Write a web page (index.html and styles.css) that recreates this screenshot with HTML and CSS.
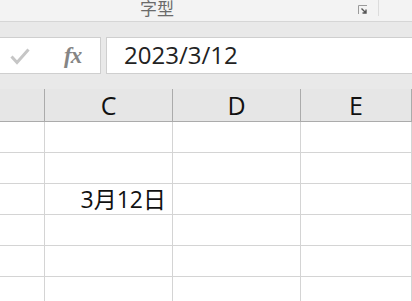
FILE: index.html
```html
<!DOCTYPE html>
<html lang="zh-Hant">
<head>
  <meta charset="UTF-8" />
  <title>字型</title>
  <link rel="stylesheet" href="styles.css">
</head>
<body>
  <div class="ribbon">
    <div class="ribbonGroup">
      <span class="groupLabel">字型</span>
      <span class="launcher">
        <svg width="10" height="10" viewBox="0 0 10 10">
          <path d="M0.5 9V0.5H9" fill="none" stroke="#9a9a9a" stroke-width="1"/>
          <path d="M3.5 3.5L8 8M8 4.5V8H4.5" fill="none" stroke="#555" stroke-width="1.4"/>
        </svg>
      </span>
    </div>
  </div>

  <div class="band"></div>

  <div class="formulaBar">
    <div class="nameArea">
      <span class="check">
        <svg width="20" height="18" viewBox="0 0 20 18">
          <path d="M1.5 9.5L7 15.5L18.5 2.5" fill="none" stroke="#c6c6c6" stroke-width="3"/>
        </svg>
      </span>
      <span class="fx">fx</span>
    </div>
    <div class="splitter"></div>
    <div class="formulaInput">2023/3/12</div>
  </div>

  <div class="band"></div>

  <div class="sheet">
    <div class="cell head"></div>
    <div class="cell head">C</div>
    <div class="cell head">D</div>
    <div class="cell head">E</div>

    <div class="cell"></div><div class="cell"></div><div class="cell"></div><div class="cell"></div>
    <div class="cell"></div><div class="cell"></div><div class="cell"></div><div class="cell"></div>
    <div class="cell"></div><div class="cell date">3月12日</div><div class="cell"></div><div class="cell"></div>
    <div class="cell"></div><div class="cell"></div><div class="cell"></div><div class="cell"></div>
    <div class="cell"></div><div class="cell"></div><div class="cell"></div><div class="cell"></div>
    <div class="cell"></div><div class="cell"></div><div class="cell"></div><div class="cell"></div>
  </div>
</body>
</html>
```

FILE: styles.css
```css
* {
  box-sizing: border-box;
}

body {
  margin: 0;
  width: 412px;
  height: 301px;
  overflow: hidden;
  background-color: #fff;
  font-family: 'Open Sans', 'Noto Sans CJK TC', sans-serif;
}

.ribbon {
  height: 22px;
  background-color: #f3f3f3;
  border-bottom: 1px solid #d6d6d6;
  overflow: hidden;
}

.ribbonGroup {
  width: 379px;
  height: 16px;
  display: flex;
  border-right: 1px solid #dcdcdc;
}

.groupLabel {
  margin-left: 140px;
  font-family: 'Noto Sans CJK TC', sans-serif;
  font-size: 17px;
  line-height: 16px;
  color: #6a6a6a;
}

.launcher {
  margin-left: auto;
  margin-right: 10px;
  margin-top: 5px;
  width: 10px;
  height: 10px;
  display: flex;
}

.band {
  height: 15px;
  background-color: #e9e9e9;
}

.formulaBar {
  height: 37px;
  display: flex;
  background-color: #e9e9e9;
}

.nameArea {
  width: 101px;
  background-color: #fff;
  border-top: 1px solid #cfcfcf;
  border-bottom: 1px solid #cfcfcf;
  border-right: 1px solid #cfcfcf;
  display: flex;
  align-items: center;
}

.check {
  margin-left: 10px;
  display: flex;
}

.fx {
  margin-left: 34px;
  font-family: 'Liberation Serif', serif;
  font-style: italic;
  font-weight: bold;
  font-size: 23px;
  color: #858585;
  letter-spacing: -1px;
}

.splitter {
  width: 5px;
}

.formulaInput {
  flex: 1;
  background-color: #fff;
  border-top: 1px solid #cfcfcf;
  border-bottom: 1px solid #cfcfcf;
  border-left: 1px solid #cfcfcf;
  padding-left: 17px;
  font-size: 24px;
  line-height: 34px;
  color: #222;
}

.sheet {
  display: grid;
  grid-template-columns: 45px 128px 128px 1fr;
  grid-template-rows: 33px repeat(6, 31px);
}

.cell {
  border-right: 1px solid #d4d4d4;
  border-bottom: 1px solid #d4d4d4;
}

.head {
  background-color: #e6e6e6;
  border-right-color: #ababab;
  border-bottom-color: #ababab;
  text-align: center;
  font-size: 25px;
  line-height: 33px;
  color: #111;
}

.date {
  text-align: right;
  padding-right: 6px;
  font-size: 23px;
  line-height: 30px;
  color: #111;
}
```
